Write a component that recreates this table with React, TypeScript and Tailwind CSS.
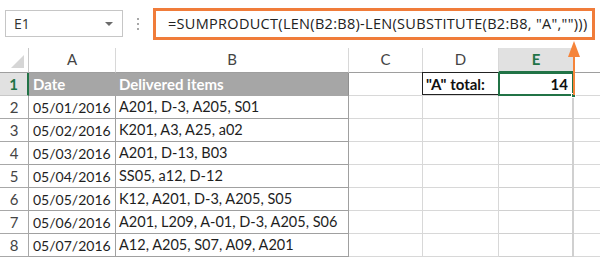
import React from "react";

const cellFont = { fontFamily: "Lato, 'Liberation Sans', sans-serif" };

const rows: [string, string][] = [
  ["05/01/2016", "A201, D-3, A205, S01"],
  ["05/02/2016", "K201, A3, A25, a02"],
  ["05/03/2016", "A201, D-13, B03"],
  ["05/04/2016", "SS05, a12, D-12"],
  ["05/05/2016", "K12, A201, D-3, A205, S05"],
  ["05/06/2016", "A201, L209, A-01, D-3, A205, S06"],
  ["05/07/2016", "A12, A205, S07, A09, A201"],
];

export default function App() {
  return (
    <div className="relative w-[600px] h-[258px] overflow-hidden bg-white" style={cellFont}>
      {/* top bar */}
      <div className="flex items-start h-[48px] pt-[8px]">
        <div className="ml-[5px] mt-[2px] w-[118px] h-[27px] border border-[#c6c6c6] flex items-center justify-between pl-[8px] pr-[9px]">
          <span className="text-[14px] text-[#333] font-['Open_Sans',sans-serif]">E1</span>
          <span className="w-0 h-0 border-l-[4px] border-r-[4px] border-t-[4px] border-l-transparent border-r-transparent border-t-[#6b6b6b]" />
        </div>
        <div className="w-[30px] flex flex-col items-center gap-[3px] mt-[10px]">
          <span className="w-[2px] h-[2px] bg-[#a8a8a8]" />
          <span className="w-[2px] h-[2px] bg-[#a8a8a8]" />
          <span className="w-[2px] h-[2px] bg-[#a8a8a8]" />
        </div>
        <div className="w-[442px] h-[32px] border-[3px] border-[#f07c3a] flex items-center pl-[12px]">
          <span className="text-[14.5px] text-[#222] whitespace-nowrap font-['Open_Sans',sans-serif] tracking-[0.3px]">
            =SUMPRODUCT(LEN(B2:B8)-LEN(SUBSTITUTE(B2:B8, "A","")))
          </span>
        </div>
      </div>

      {/* grid */}
      <div className="grid grid-cols-[29px_87px_233px_74px_76px_75px_1fr] grid-rows-[25px_23px_23px_23px_23px_23px_23px_23px_23px] text-[14px]">
        {/* header row */}
        <div className="relative border-r border-b border-[#c8c8c8] border-b-[#9e9e9e]">
          <div className="absolute right-[4px] bottom-[4px] w-0 h-0 border-b-[13px] border-l-[13px] border-b-[#d6d6d6] border-l-transparent" />
        </div>
        {["A", "B", "C", "D"].map((c) => (
          <div key={c} className="flex items-end justify-center pb-[2px] border-r border-[#d8d8d8] border-b border-b-[#9e9e9e] text-[15px] text-[#444]">
            {c}
          </div>
        ))}
        <div className="flex items-end justify-center pb-[1px] bg-[#e1e1e1] border-r border-[#c8c8c8] border-b-2 border-b-[#217346] text-[15px] font-bold text-[#217346]">
          E
        </div>
        <div className="border-b border-[#9e9e9e]" />

        {/* row 1 */}
        <div className="flex items-center justify-center bg-[#e1e1e1] border-r-2 border-[#217346] border-b border-b-[#c8c8c8] text-[15px] font-bold text-[#217346]">
          1
        </div>
        <div className="flex items-center pl-[4px] bg-[#a6a6a6] border-r border-b border-[#a6a6a6] text-[15px] font-bold text-white">
          Date
        </div>
        <div className="flex items-center pl-[3px] bg-[#a6a6a6] border-r border-b border-[#8e8e8e] border-b-[#a6a6a6] text-[15px] font-bold text-white">
          Delivered items
        </div>
        <div className="border-r border-b border-[#d8d8d8]" />
        <div className="relative flex items-center pl-[3px] border-r border-b border-[#d8d8d8] text-[15px] font-bold text-[#111]">
          <div className="absolute -left-[1px] -top-[1px] -right-[1px] bottom-0 border border-[#222]" />
          "A" total:
        </div>
        <div className="relative flex items-center justify-end pr-[5px] border-r border-b border-[#d8d8d8] text-[15px] font-bold text-[#111]">
          <div className="absolute -left-[1px] -top-[1px] -right-[1px] -bottom-[1px] border-2 border-[#217346]" />
          <div className="absolute -right-[3px] -bottom-[3px] w-[5px] h-[5px] bg-[#217346] border border-white" />
          14
        </div>
        <div className="border-b border-[#d8d8d8]" />

        {rows.map(([d, items], i) => (
          <React.Fragment key={i}>
            <div className="flex items-center justify-center border-r border-b border-[#a8a8a8] text-[15px] text-[#444]">
              {i + 2}
            </div>
            <div className="flex items-center pl-[4px] border-r border-b border-[#a0a0a0] text-[#1e1e1e] whitespace-nowrap">
              {d}
            </div>
            <div className="flex items-center pl-[3px] border-r border-b border-[#a0a0a0] text-[14.5px] text-[#1e1e1e] whitespace-nowrap">
              {items}
            </div>
            <div className="border-r border-b border-[#d8d8d8]" />
            <div className="border-r border-b border-[#d8d8d8]" />
            <div className="border-r-2 border-b border-[#d0d0d0]" />
            <div className="border-b border-[#d8d8d8]" />
          </React.Fragment>
        ))}
      </div>

      {/* arrow */}
      <svg className="absolute left-[565px] top-[39px]" width="18" height="58" viewBox="0 0 18 58">
        <path d="M9 2 L15 18 L3 18 Z" fill="#f5843a" />
        <line x1="9" y1="16" x2="9" y2="56" stroke="#f5843a" strokeWidth="2" />
      </svg>
    </div>
  );
}
